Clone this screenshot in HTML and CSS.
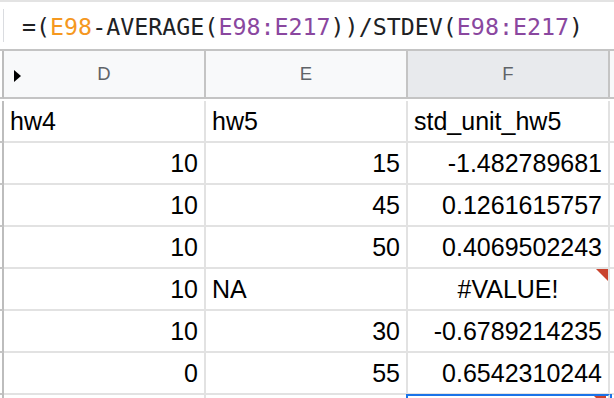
FILE: index.html
```html
<!DOCTYPE html>
<html lang="en">
<head>
  <meta charset="UTF-8" />
  <title>Sheet - std_unit_hw5</title>
  <link rel="stylesheet" href="styles.css">
</head>
<body>

  <!-- Formula bar -->
  <div class="formula-bar">
    <div class="fx-divider"></div>
    <div class="formula">=(<span class="ref-a">E98</span>-AVERAGE(<span class="ref-b">E98:E217</span>))/STDEV(<span class="ref-b">E98:E217</span>)</div>
  </div>

  <!-- Grid -->
  <div class="grid">
    <div class="row head">
      <div class="rn"></div>
      <div class="cell col-head"><span class="group-arrow"></span><span>D</span><span></span></div>
      <div class="cell col-head"><span></span><span>E</span><span></span></div>
      <div class="cell col-head active"><span></span><span>F</span><span></span></div>
      <div class="cell col-head rest"></div>
    </div>

    <div class="row">
      <div class="rn"></div>
      <div class="cell">hw4</div>
      <div class="cell">hw5</div>
      <div class="cell">std_unit_hw5</div>
      <div class="cell rest"></div>
    </div>
    <div class="row">
      <div class="rn"></div>
      <div class="cell num">10</div>
      <div class="cell num">15</div>
      <div class="cell num">-1.482789681</div>
      <div class="cell rest"></div>
    </div>
    <div class="row">
      <div class="rn"></div>
      <div class="cell num">10</div>
      <div class="cell num">45</div>
      <div class="cell num">0.1261615757</div>
      <div class="cell rest"></div>
    </div>
    <div class="row">
      <div class="rn"></div>
      <div class="cell num">10</div>
      <div class="cell num">50</div>
      <div class="cell num">0.4069502243</div>
      <div class="cell rest"></div>
    </div>
    <div class="row">
      <div class="rn"></div>
      <div class="cell num">10</div>
      <div class="cell">NA</div>
      <div class="cell center err">#VALUE!</div>
      <div class="cell rest"></div>
    </div>
    <div class="row">
      <div class="rn"></div>
      <div class="cell num">10</div>
      <div class="cell num">30</div>
      <div class="cell num">-0.6789214235</div>
      <div class="cell rest"></div>
    </div>
    <div class="row">
      <div class="rn"></div>
      <div class="cell num">0</div>
      <div class="cell num">55</div>
      <div class="cell num">0.6542310244</div>
      <div class="cell rest"></div>
    </div>
    <div class="row partial">
      <div class="rn"></div>
      <div class="cell"></div>
      <div class="cell"></div>
      <div class="cell err selected"></div>
      <div class="cell rest"></div>
    </div>
  </div>

</body>
</html>
```

FILE: styles.css
```css
body {
  margin: 0;
  background: #fff;
  font-family: "Liberation Sans", Arial, sans-serif;
  overflow: hidden;
}

/* formula bar */
.formula-bar {
  height: 47px;
  border-top: 2px solid #e3e3e3;
  display: flex;
  align-items: center;
}

.fx-divider {
  width: 1px;
  height: 33px;
  margin-left: 3px;
  background: #dadce0;
}

.formula {
  margin-left: 18px;
  font-family: "DejaVu Sans Mono", monospace;
  font-size: 23.3px;
  color: #202124;
  white-space: nowrap;
  padding-top: 2px;
}

.ref-a {
  color: #f5981f;
}

.ref-b {
  color: #8a479f;
}

/* grid */
.row {
  display: flex;
  height: 42px;
}

.rn {
  width: 2px;
  flex: none;
  height: 40px;
  border-right: 2px solid #bdbdbd;
  border-bottom: 2px solid #c4c4c4;
}

.cell {
  width: 188px;
  flex: none;
  height: 40px;
  line-height: 41px;
  padding: 0 6px;
  border-right: 2px solid #e2e2e2;
  border-bottom: 2px solid #e2e2e2;
  font-size: 25px;
  color: #000;
  white-space: nowrap;
  position: relative;
}

.cell.rest {
  flex: 1;
  width: auto;
  border-right: none;
  padding: 0;
}

.num {
  text-align: right;
}

.center {
  text-align: center;
}

/* last row, cut off by the window */
.row.partial {
  height: 6px;
  margin-top: -1px;
}

.partial .rn,
.partial .cell {
  height: 6px;
  border-bottom: none;
  overflow: hidden;
}

/* error marker in the corner of a cell */
.err::before {
  content: "";
  position: absolute;
  top: 0;
  right: 0;
  width: 0;
  height: 0;
  border-top: 12px solid #c9432d;
  border-left: 12px solid transparent;
}

.selected {
  border-top: 2px solid #1a73e8;
  box-shadow: -2px 0 0 #1a73e8, 2px 0 0 #1a73e8;
  height: 4px;
}

.selected::before {
  right: 2px;
}

/* column headers */
.head {
  height: 50px;
  border-top: 2px solid #c4c4c4;
}

.head .rn {
  height: 46px;
  border-bottom: 2px solid #c4c4c4;
}

.col-head {
  height: 46px;
  line-height: normal;
  display: grid;
  grid-template-columns: 1fr auto 1fr;
  align-items: center;
  background: #f8f9fa;
  border-right: 2px solid #c4c4c4;
  border-bottom: 2px solid #c4c4c4;
  font-size: 18.5px;
  color: #5f6368;
}

.col-head.active {
  background: #e8eaed;
}

.col-head.rest {
  display: block;
}

.group-arrow {
  width: 0;
  height: 0;
  margin-left: 4px;
  margin-top: 3px;
  border-left: 7px solid #000;
  border-top: 6px solid transparent;
  border-bottom: 6px solid transparent;
}
```
